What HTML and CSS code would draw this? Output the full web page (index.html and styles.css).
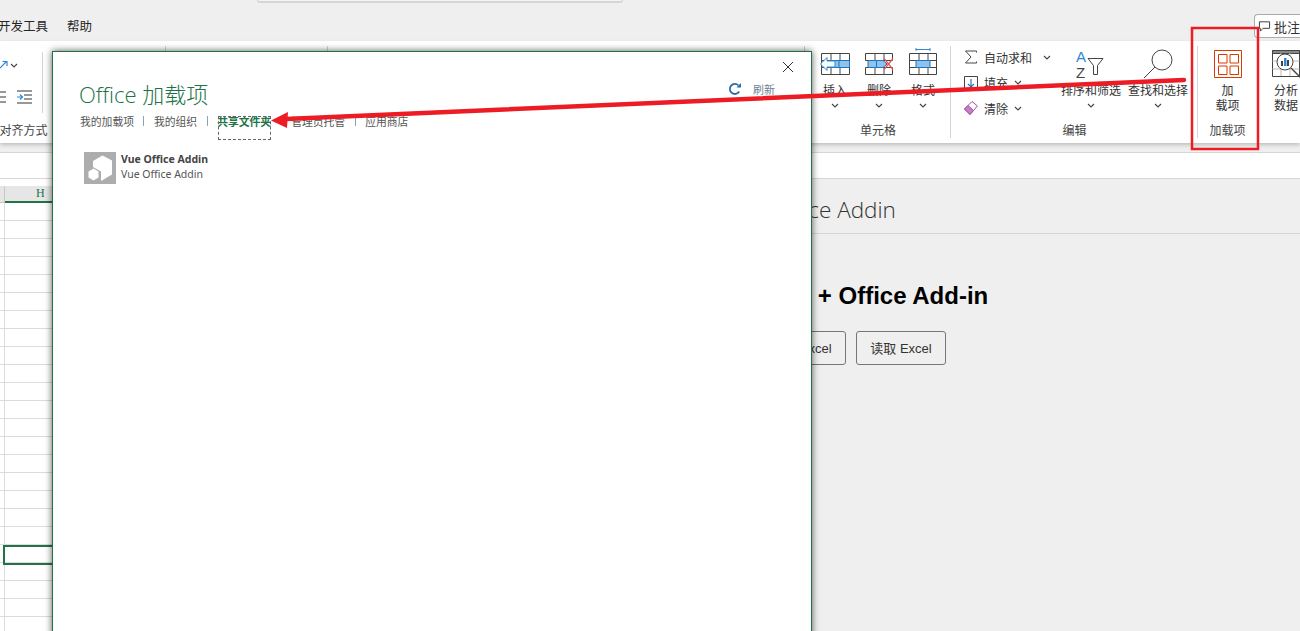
FILE: index.html
```html
<!DOCTYPE html>
<html lang="zh-CN">
<head>
<meta charset="utf-8">
<title>Office 加载项</title>
<link rel="stylesheet" href="styles.css">
</head>
<body>
<div class="app">
  <header class="tabbar">
    <div class="searchbar"></div>
    <nav class="tabs"><span class="tab-first">开发工具</span><span>帮助</span></nav>
    <button class="comment">
      <svg width="14" height="14" viewBox="0 0 14 14"><path d="M1.5 2.500h11v7H5.500l-3 3v-3h-1z" fill="none" stroke="#333" stroke-width="1"/></svg>
      <span>批注</span>
    </button>
  </header>

  <section class="ribbon">
    <div class="group g-align">
      <div class="align-tools">
        <div class="align-row r1">
          <svg width="8" height="10" viewBox="0 0 8 10"><path d="M0 8l6-6M2.500 1.500H7V6" fill="none" stroke="#2b88d8" stroke-width="1.200"/></svg>
          <svg class="chev" width="8" height="5" viewBox="0 0 8 5"><path d="M1 1l3 3 3-3" fill="none" stroke="#444" stroke-width="1.100"/></svg>
        </div>
        <div class="align-row r2">
          <svg width="7" height="12" viewBox="0 0 7 12"><path d="M0 1h6M0 6h6M0 11h6" stroke="#333" stroke-width="1"/></svg>
          <svg width="15" height="14" viewBox="0 0 15 14"><path d="M0 1h15M7 5h8M7 9h8M0 13h15" stroke="#333" stroke-width="1"/><path d="M0 7h5M3 4.500 5.500 7 3 9.500" fill="none" stroke="#2b88d8" stroke-width="1.200"/></svg>
        </div>
      </div>
      <div class="group-label align-label">对齐方式</div>
    </div>
    <div class="group g-2"></div>
    <div class="group g-3"></div>

    <div class="group g-cells">
      <div class="group-body">
        <div class="tool">
          <svg width="32" height="32" viewBox="0 0 32 32"><path d="M2.500 5.500h28v21h-28zM2.500 12.500h28M2.500 19.500h28M12 5.500v21M21 5.500v21" fill="#fff" stroke="#444"/><rect x="10" y="12.500" width="20.500" height="7" fill="#8fc3ee" stroke="#1f76bd"/><path d="M20 12.500v7" stroke="#1f76bd"/><path d="M16 13H8V9.500L1.500 16 8 22.500V19H16z" fill="#fff" stroke="#2b88d8"/></svg>
          <span>插入</span>
          <svg class="chev" width="8" height="5" viewBox="0 0 8 5"><path d="M1 1l3 3 3-3" fill="none" stroke="#444" stroke-width="1.100"/></svg>
        </div>
        <div class="tool">
          <svg width="32" height="32" viewBox="0 0 32 32"><path d="M2.500 5.500h27v7h-27zM2.500 19.500h27v7h-27zM12 5.500v7M21 5.500v7M12 19.500v7M21 19.500v7" fill="#fff" stroke="#444"/><path d="M5 12.500h15l4 3.500-4 3.500H5z" fill="#8fc3ee" stroke="#1f76bd"/><path d="M13.500 12.500v7" stroke="#1f76bd"/><path d="M21 10.500l9 11M30 10.500l-9 11" stroke="#f0524f" stroke-width="1.300"/></svg>
          <span>删除</span>
          <svg class="chev" width="8" height="5" viewBox="0 0 8 5"><path d="M1 1l3 3 3-3" fill="none" stroke="#444" stroke-width="1.100"/></svg>
        </div>
        <div class="tool">
          <svg width="32" height="32" viewBox="0 0 32 32"><path d="M2.500 5.500h27v21h-27zM2.500 12.500h27M2.500 19.500h27M12 5.500v21M21 5.500v21" fill="#fff" stroke="#444"/><rect x="9" y="12.500" width="14" height="7" fill="#8fc3ee" stroke="#1f76bd"/><path d="M9 1.500h14M9 0v3M23 0v3" stroke="#2b88d8"/></svg>
          <span>格式</span>
          <svg class="chev" width="8" height="5" viewBox="0 0 8 5"><path d="M1 1l3 3 3-3" fill="none" stroke="#444" stroke-width="1.100"/></svg>
        </div>
      </div>
      <div class="group-label">单元格</div>
    </div>

    <div class="group g-edit">
      <div class="group-body">
        <div class="edit-col">
          <div class="edit-row">
            <svg width="14" height="14" viewBox="0 0 14 14"><path d="M12.500 2.500V1H1.500l5.500 6-5.500 6h11v-1.500" fill="none" stroke="#444"/></svg>
            <span>自动求和</span>
            <svg class="chev wide" width="8" height="5" viewBox="0 0 8 5"><path d="M1 1l3 3 3-3" fill="none" stroke="#444" stroke-width="1.100"/></svg>
          </div>
          <div class="edit-row">
            <svg width="14" height="14" viewBox="0 0 14 14"><path d="M.5.500h13v13H.500z" fill="#fff" stroke="#444"/><path d="M7 3v8M4 8l3 3 3-3" fill="none" stroke="#1f76bd" stroke-width="1.200"/></svg>
            <span>填充</span>
            <svg class="chev" width="8" height="5" viewBox="0 0 8 5"><path d="M1 1l3 3 3-3" fill="none" stroke="#444" stroke-width="1.100"/></svg>
          </div>
          <div class="edit-row">
            <svg width="14" height="14" viewBox="0 0 14 14"><path d="M.5 8 8 .5 13.500 5 6 13.500z" fill="#fff" stroke="#a64ca6"/><path d="M.5 8 4 4.500 9.500 9.500 6 13.500z" fill="#c77dc7" stroke="#a64ca6"/></svg>
            <span>清除</span>
            <svg class="chev" width="8" height="5" viewBox="0 0 8 5"><path d="M1 1l3 3 3-3" fill="none" stroke="#444" stroke-width="1.100"/></svg>
          </div>
        </div>
        <div class="tool tool-wide">
          <svg width="32" height="32" viewBox="0 0 32 32"><text x="1" y="14" class="az-a">A</text><text x="1" y="30" class="az-z">Z</text><path d="M13 10.500h15l-5.500 7v9h-4v-9z" fill="#fff" stroke="#444"/></svg>
          <span>排序和筛选</span>
          <svg class="chev" width="8" height="5" viewBox="0 0 8 5"><path d="M1 1l3 3 3-3" fill="none" stroke="#444" stroke-width="1.100"/></svg>
        </div>
        <div class="tool tool-wide">
          <svg width="32" height="32" viewBox="0 0 32 32"><circle cx="20" cy="12" r="10" fill="#fff" stroke="#444"/><path d="M13 19 2 30" stroke="#444"/></svg>
          <span>查找和选择</span>
          <svg class="chev" width="8" height="5" viewBox="0 0 8 5"><path d="M1 1l3 3 3-3" fill="none" stroke="#444" stroke-width="1.100"/></svg>
        </div>
      </div>
      <div class="group-label">编辑</div>
    </div>

    <div class="group g-addin">
      <div class="group-body">
        <div class="tool tool-addin">
          <svg width="32" height="32" viewBox="0 0 32 32"><path d="M2.500 2.500h27v27h-27z" fill="none" stroke="#d83b01"/><path d="M6.500 6.500h8.500v8.500H6.500zM18 6.500h8.500v8.500H18zM6.500 18h8.500v8.500H6.500zM18 18h8.500v8.500H18z" fill="none" stroke="#d83b01"/></svg>
          <span>加<br>载项</span>
        </div>
      </div>
      <div class="group-label">加载项</div>
    </div>

    <div class="group g-analyze">
      <div class="group-body">
        <div class="tool tool-analyze">
          <svg width="32" height="32" viewBox="0 0 32 32"><path d="M2.500 2.500h27v26h-27z" fill="#fff" stroke="#444"/><path d="M2.500 2.500h27v3h-27z" fill="#888" stroke="#444"/><path d="M2.500 13h27M2.500 21h27M11 5v23M20 5v23" stroke="#bbb"/><circle cx="15" cy="14" r="8" fill="#fff" stroke="#444"/><rect x="11" y="13" width="2" height="5" fill="#444"/><rect x="14" y="10" width="2.500" height="8" fill="#2b88d8"/><rect x="17" y="12" width="2" height="6" fill="#444"/><path d="M21 20l10 10" stroke="#444" stroke-width="1.300"/></svg>
          <span>分析<br>数据</span>
        </div>
      </div>
    </div>
  </section>

  <div class="ribbon-gap"></div>
  <div class="formula"></div>

  <main class="main">
    <div class="sheet">
      <div class="col-head"><span class="col-h">H</span></div>
      <div class="grid">
        <div class="active-cell"></div>
      </div>
    </div>
    <aside class="pane">
      <div class="pane-title">Vue Office Addin</div>
      <div class="pane-body">
        <h2>Vue 3 + Office Add-in</h2>
        <div class="pane-actions">
          <button>写入 Excel</button>
          <button>读取 Excel</button>
        </div>
      </div>
    </aside>
  </main>

  <div class="dialog">
    <button class="close" aria-label="关闭">
      <svg width="12" height="12" viewBox="0 0 12 12"><path d="M1 1l10 10M11 1 1 11" stroke="#333" stroke-width="1"/></svg>
    </button>
    <div class="dialog-head">
      <h1>Office 加载项</h1>
      <div class="refresh">
        <svg width="14" height="14" viewBox="0 0 14 14"><path d="M11.200 9.500A5 5 0 1 1 10.500 3.500" fill="none" stroke="#2b6ca3" stroke-width="1.800"/><path d="M8.500 5.500h4.500V1z" fill="#2b6ca3"/></svg>
        <span>刷新</span>
      </div>
    </div>
    <nav class="dialog-nav">
      <a>我的加载项</a><i></i><a>我的组织</a><i></i><a class="current">共享文件夹</a><a class="admin">管理员托管</a><i></i><a>应用商店</a>
    </nav>
    <div class="addin-item">
      <div class="addin-icon">
        <svg width="32" height="32" viewBox="0 0 32 32"><path d="M9 9 18.500 3.500 28 8.500V22.500L17 29V19.500L9 15z" fill="#fff"/><path d="M9.500 16.500 14.500 19.500V25.500L9.500 28.500 4.500 25.500V19.500z" fill="#fff"/></svg>
      </div>
      <div class="addin-text">
        <strong>Vue Office Addin</strong>
        <span>Vue Office Addin</span>
      </div>
    </div>
  </div>

  <svg class="annotation" width="1300" height="631" viewBox="0 0 1300 631">
    <rect x="1192" y="28" width="66" height="121" fill="none" stroke="#ed1c24" stroke-width="2.500"/>
    <path d="M1184 80 286 119" stroke="#ed1c24" stroke-width="4.500" stroke-linecap="round"/>
    <path d="M271 120.500 288 112 287 128z" fill="#ed1c24"/>
  </svg>
</div>
</body>
</html>
```
FILE: styles.css
```css
* { box-sizing: border-box; }
html, body { margin: 0; padding: 0; }
body {
  font-family: "Noto Sans CJK SC", "Liberation Sans", sans-serif;
  font-size: 12px;
  color: #333;
  background: #fff;
}
button { font: inherit; color: inherit; }

.app {
  position: relative;
  width: 1300px;
  height: 631px;
  overflow: hidden;
  display: flex;
  flex-direction: column;
}

/* title / tabs */
.tabbar {
  position: relative;
  flex: 0 0 41px;
  background: #efefef;
  display: flex;
  align-items: flex-start;
}
.searchbar {
  position: absolute;
  left: 257px;
  top: -8px;
  width: 366px;
  height: 11px;
  background: #f4f4f4;
  border: 1px solid #d6d6d6;
  border-bottom-width: 2px;
  border-radius: 3px;
}
.tabs {
  display: flex;
  gap: 19px;
  margin-left: -2px;
  padding-top: 17px;
  line-height: 18px;
  font-size: 12.500px;
  color: #262626;
}
.comment {
  margin-left: auto;
  margin-top: 14px;
  width: 46px;
  height: 24px;
  padding: 0 0 0 3px;
  display: flex;
  align-items: center;
  gap: 3px;
  background: #fff;
  border: 1px solid #ababab;
  border-right: 0;
  border-radius: 4px 0 0 4px;
  white-space: nowrap;
  overflow: hidden;
  font-size: 13px;
}

/* ribbon */
.ribbon {
  flex: 0 0 102px;
  display: flex;
  background: #fff;
  padding-top: 5px;
  box-shadow: 0 2px 4px rgba(0, 0, 0, .2);
  position: relative;
  z-index: 1;
}
.group {
  height: 92px;
  border-right: 1px solid #d4d4d4;
  display: flex;
  flex-direction: column;
  align-items: stretch;
  flex: none;
}
.group-body { display: flex; flex: 1; min-height: 0; padding-top: 2px; }
.group-label {
  height: 18px;
  line-height: 20px;
  text-align: center;
  color: #444;
}
.chev { display: block; flex: none; }

.g-align { width: 166px; }
.align-tools {
  width: 43px;
  height: 61px;
  margin-top: 6px;
  border-right: 1px solid #d4d4d4;
  flex: none;
}
.align-row { display: flex; align-items: center; }
.align-row.r1 { height: 16px; margin-top: 5px; gap: 2px; }
.align-row.r2 { height: 16px; margin-top: 16px; gap: 10px; }
.align-label { margin: auto 0 0 -1px; width: 49px; white-space: nowrap; }
.g-2 { width: 162px; }
.g-3 { width: 477px; }

.g-cells { width: 146px; }
.g-cells .group-body { padding-left: 8px; }
.g-cells .group-label { padding-left: 1px; }
.tool {
  width: 44px;
  display: flex;
  flex-direction: column;
  align-items: center;
  line-height: 15px;
  text-align: center;
  color: #333;
}
.tool > svg:first-child { flex: none; margin-bottom: 2px; }
.tool > .chev { margin-top: 6px; }
.tool-wide { width: 60px; white-space: nowrap; }
.tool-wide + .tool-wide { margin-left: 7px; }

.g-edit { width: 247px; }
.g-edit .group-label { padding-left: 1px; }
.edit-col {
  width: 110px;
  padding-left: 13px;
  flex: none;
  display: flex;
  flex-direction: column;
  gap: 7.500px;
}
.edit-row {
  height: 18px;
  display: flex;
  align-items: center;
  gap: 6px;
  white-space: nowrap;
}
.chev.wide { margin-left: 5px; }
.az-a, .az-z { font-family: "Liberation Sans", sans-serif; font-size: 15px; }
.az-a { fill: #2b88d8; }
.az-z { fill: #444; }

.g-addin { width: 60px; }
.tool-addin { width: 59px; }
.g-analyze { width: 56px; border-right: 0; }
.tool-analyze { width: 56px; }

.ribbon-gap { flex: 0 0 9px; background: #efefef; }
.formula {
  flex: 0 0 27px;
  background: #fff;
  border-top: 1px solid #d6d6d6;
  border-bottom: 1px solid #d6d6d6;
}

/* sheet + task pane */
.main { flex: 1; display: flex; min-height: 0; }
.sheet {
  width: 715px;
  flex: none;
  padding-top: 7px;
  display: flex;
  flex-direction: column;
  background: #fff;
}
.col-head {
  flex: 0 0 17px;
  background: #e6e6e6;
  display: flex;
}
.col-head::before {
  content: "";
  width: 4px;
  flex: none;
  border-right: 1px solid #c8c8c8;
  border-bottom: 1px solid #c8c8c8;
}
.col-h {
  flex: 1;
  padding-left: 32px;
  border-bottom: 2px solid #217346;
  font-family: "Liberation Serif", serif;
  font-size: 12px;
  line-height: 15px;
  color: #217346;
  transform: none;
  text-indent: -1px;
}
.grid {
  flex: 1;
  position: relative;
  background:
    linear-gradient(90deg, transparent 4px, #dcdcdc 4px, #dcdcdc 5px, transparent 5px),
    repeating-linear-gradient(180deg, #fff 0, #fff 17px, #dcdcdc 17px, #dcdcdc 18px);
}
.active-cell {
  position: absolute;
  left: 3px;
  top: 342px;
  width: 60px;
  height: 20px;
  border: 2px solid #217346;
}

.pane {
  flex: 1;
  background: #efefef;
  min-width: 0;
  white-space: nowrap;
}
.pane-title {
  height: 55px;
  padding: 15px 0 0 13px;
  font-family: "Open Sans", sans-serif;
  font-weight: 300;
  font-size: 22.500px;
  line-height: 32px;
  color: #333;
  border-bottom: 1px solid #d4d4d4;
}
.pane-body { padding: 44px 0 0 33px; }
.pane-body h2 {
  margin: 0 0 17px;
  font-family: "Liberation Sans", sans-serif;
  font-weight: 700;
  font-size: 24px;
  line-height: 36px;
  color: #000;
}
.pane-actions { display: flex; gap: 10px; margin-left: 8px; }
.pane-actions button {
  width: 90px;
  height: 34px;
  padding: 0 0 1px;
  background: #efefef;
  border: 1px solid #767676;
  border-radius: 3px;
  font-family: "Liberation Sans", "Noto Sans CJK SC", sans-serif;
  font-size: 13px;
  color: #333;
}

/* dialog */
.dialog {
  position: absolute;
  left: 52px;
  top: 51px;
  width: 760px;
  height: 600px;
  z-index: 2;
  background: #fff;
  border: 1px solid #217346;
  box-shadow: 0 0 7px rgba(0, 0, 0, .65);
  padding: 25px 36px 0 26px;
}
.close {
  position: absolute;
  top: 9px;
  right: 17px;
  width: 12px;
  height: 12px;
  padding: 0;
  background: none;
  border: 0;
  display: flex;
}
.dialog-head {
  display: flex;
  justify-content: space-between;
  align-items: flex-start;
}
.dialog-head h1 {
  margin: 0;
  font-family: "Open Sans", "Noto Sans CJK SC", sans-serif;
  font-weight: 300;
  font-size: 22px;
  line-height: 34px;
  color: #217346;
}
.refresh {
  display: flex;
  align-items: center;
  gap: 11px;
  margin-top: 4px;
  font-size: 11px;
  line-height: 16px;
  color: #6d7f98;
}
.dialog-nav {
  display: flex;
  align-items: center;
  height: 16px;
  margin: 2px 0 0 1px;
  font-size: 10.800px;
  color: #555;
  white-space: nowrap;
}
.dialog-nav i {
  width: 1px;
  height: 10px;
  margin: 0 9.500px;
  background: #8aa4c0;
}
.dialog-nav .current {
  position: relative;
  margin-right: 20px;
  font-weight: 700;
  color: #217346;
}
.dialog-nav .current::after {
  content: "";
  position: absolute;
  left: 1px;
  top: 3px;
  right: 0;
  height: 22px;
  border: 1px dashed #666;
}
.addin-item {
  display: flex;
  gap: 5px;
  margin: 23px 0 0 5px;
}
.addin-icon {
  width: 32px;
  height: 32px;
  background: #adadad;
  display: flex;
}
.addin-text {
  display: flex;
  flex-direction: column;
  font-family: "Noto Sans", sans-serif;
  font-size: 10.500px;
  line-height: 15px;
  color: #555;
  white-space: nowrap;
}
.addin-text strong { font-weight: 700; color: #444; }

.annotation {
  position: absolute;
  left: 0;
  top: 0;
  z-index: 3;
  pointer-events: none;
}
```
